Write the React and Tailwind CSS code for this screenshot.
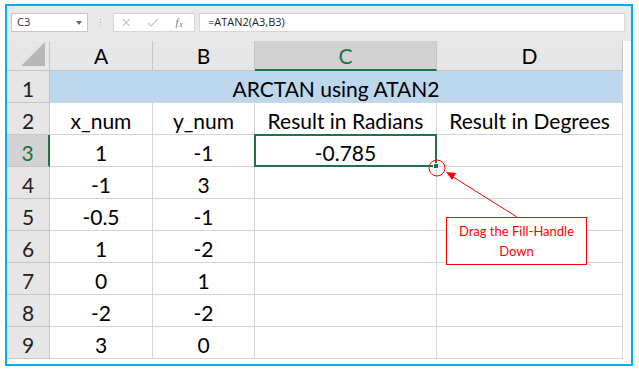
import React from 'react'

const font = { fontFamily: 'Lato, "Open Sans", sans-serif' }

const rows = [
  ['1', '-1'],
  ['-1', '3'],
  ['-0.5', '-1'],
  ['1', '-2'],
  ['0', '1'],
  ['-2', '-2'],
  ['3', '0'],
]

const cell = 'border-r border-b border-[#d4d4d4] flex items-end justify-center pb-[3px] text-[21px] leading-none text-black'
const rowHead = 'border-r border-b border-[#c6c6c6] bg-[#e6e6e6] flex items-end justify-center pb-[3px] text-[21px] leading-none text-[#222]'

function FormulaBar() {
  return (
    <div className="h-[35px] bg-[#e9e9e9] flex items-start pt-[7px] pl-[4px] pr-[6px] font-['Open_Sans',sans-serif]">
      <div className="w-[77px] h-[19px] bg-white border border-[#c6c6c6] flex items-center justify-between pl-[5px] pr-[5px] text-[11px] text-[#333]">
        <span>C3</span>
        <span className="w-0 h-0 border-l-[3px] border-r-[3px] border-t-[4px] border-l-transparent border-r-transparent border-t-[#666]" />
      </div>
      <div className="w-[25px] h-[19px] flex flex-col items-center justify-center gap-[2px]">
        <span className="w-[1px] h-[1px] bg-[#aaa]" />
        <span className="w-[1px] h-[1px] bg-[#aaa]" />
        <span className="w-[1px] h-[1px] bg-[#aaa]" />
      </div>
      <div className="w-[82px] h-[19px] bg-white border border-[#d6d6d6] flex items-center text-[#b9b9b9]">
        <svg width="82" height="17" viewBox="0 0 82 17">
          <path d="M9 5 L16 12 M16 5 L9 12" stroke="#c2c2c2" strokeWidth="1.2" />
          <path d="M35 9 L38 12 L45 5" stroke="#c2c2c2" strokeWidth="1.2" fill="none" />
          <text x="63" y="12" fontFamily="Liberation Serif, serif" fontStyle="italic" fontSize="11" fill="#777">f</text>
          <text x="67" y="13" fontFamily="Liberation Serif, serif" fontStyle="italic" fontSize="8" fill="#777">x</text>
        </svg>
      </div>
      <div className="ml-[4px] flex-1 h-[19px] bg-white border border-[#d6d6d6] flex items-center pl-[8px] text-[11px] text-[#222]">
        =ATAN2(A3,B3)
      </div>
    </div>
  )
}

export default function App() {
  return (
    <div className="w-[639px] h-[372px] bg-white pt-[4px] pl-[5px]" style={font}>
      <div className="relative w-[628px] h-[362px] border-2 border-[#00b0f0] bg-white overflow-hidden">
        <FormulaBar />
        <div className="grid grid-cols-[43px_103px_102px_182px_186px] grid-rows-[30px_repeat(9,32px)]">
          {/* column headers */}
          <div className="relative bg-[#e6e6e6] border-r border-b border-[#c6c6c6]">
            <div className="absolute right-[4px] bottom-[4px] w-0 h-0" style={{ borderBottom: '24px solid #b7b7b7', borderLeft: '24px solid transparent' }} />
          </div>
          <div className="bg-[#e6e6e6] border-r border-b border-[#c6c6c6] flex items-end justify-center pb-[4px] text-[21px] leading-none">A</div>
          <div className="bg-[#e6e6e6] border-r border-b border-[#c6c6c6] flex items-end justify-center pb-[4px] text-[21px] leading-none">B</div>
          <div className="bg-[#d2d2d2] border-r border-[#c6c6c6] border-b-2 border-b-[#217346] flex items-end justify-center pb-[3px] text-[21px] leading-none text-[#217346]">C</div>
          <div className="bg-[#e6e6e6] border-r border-b border-[#c6c6c6] flex items-end justify-center pb-[4px] text-[21px] leading-none">D</div>

          {/* row 1 */}
          <div className={rowHead}>1</div>
          <div className="col-span-4 bg-[#bdd7ee] border-r border-b border-[#d4d4d4] flex items-end justify-center pb-[3px] text-[21px] leading-none">
            ARCTAN using ATAN2
          </div>

          {/* row 2 */}
          <div className={rowHead}>2</div>
          <div className={cell}>x_num</div>
          <div className={cell}>y_num</div>
          <div className={cell}>Result in Radians</div>
          <div className={cell}>Result in Degrees</div>

          {rows.map((r, i) => {
            const n = i + 3
            const sel = n === 3
            return (
              <React.Fragment key={n}>
                <div className={sel ? 'bg-[#d2d2d2] border-b border-[#c6c6c6] border-r-2 border-r-[#217346] flex items-end justify-center pb-[3px] text-[21px] leading-none text-[#217346]' : rowHead}>{n}</div>
                <div className={cell}>{r[0]}</div>
                <div className={cell}>{r[1]}</div>
                {sel ? (
                  <div className="relative border-2 border-[#217346] -mt-[1px] -ml-[1px] flex items-end justify-center pb-[2px] text-[21px] leading-none">
                    -0.785
                    <span className="absolute -right-[4px] -bottom-[4px] w-[6px] h-[6px] bg-[#217346] border border-white" />
                  </div>
                ) : (
                  <div className={cell} />
                )}
                <div className={cell} />
              </React.Fragment>
            )
          })}
        </div>

        {/* callout overlay */}
        <svg className="absolute left-0 top-0 pointer-events-none" width="628" height="362">
          <circle cx="430" cy="162" r="8" fill="none" stroke="#ff0000" strokeWidth="1" />
          <line x1="510" y1="211" x2="443" y2="169" stroke="#ff0000" strokeWidth="1" />
          <path d="M439 166 L449 167 L445 174 Z" fill="#ff0000" />
        </svg>
        <div className="absolute left-[439px] top-[211px] w-[141px] h-[48px] border border-[#ff0000] bg-white flex flex-col items-center justify-center text-[#ff0000] text-[13px] leading-[20px]">
          <span>Drag the Fill-Handle</span>
          <span>Down</span>
        </div>
      </div>
    </div>
  )
}
